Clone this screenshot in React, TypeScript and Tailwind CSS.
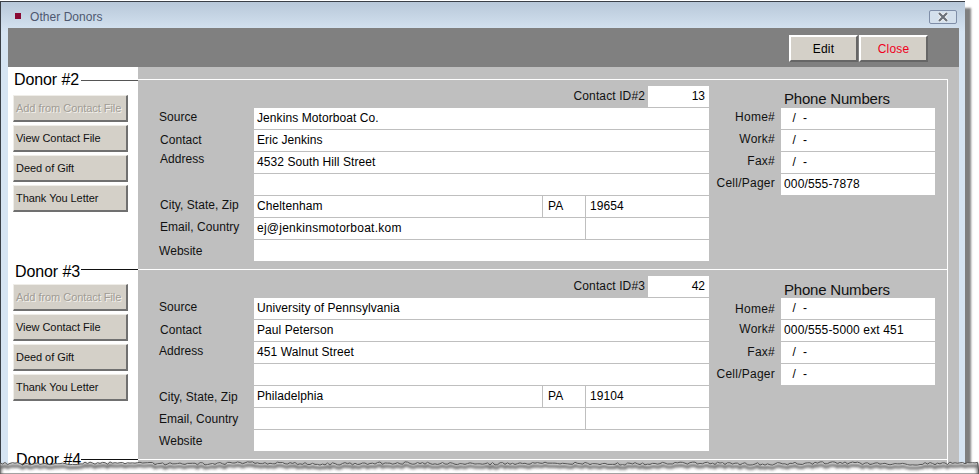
const sans = "font-['Liberation_Sans',Arial,sans-serif]";

function Btn({ label, disabled }: { label: string; disabled?: boolean }) {
  return (
    <div
      className={`h-[27px] w-[115px] bg-[#d4d0c8] border-t border-l border-t-[#efede8] border-l-[#efede8] border-r-2 border-b-2 border-r-[#707070] border-b-[#707070] flex items-center pl-[2px] text-[11px] leading-none tracking-[-0.05px] ${disabled ? "text-[#a09c95] [text-shadow:1px_1px_0_#f4f2ee]" : "text-[#111]"}`}
    >
      {label}
    </div>
  );
}

function TopBtn({ label, red }: { label: string; red?: boolean }) {
  return (
    <div
      className={`h-[27px] w-[69px] bg-[#d4d0c8] border-t-2 border-l-2 border-t-white border-l-white border-r-2 border-b-2 border-r-[#666] border-b-[#666] flex items-center justify-center text-[12px] tracking-[0.2px] ${red ? "text-[#f0001c]" : "text-black"}`}
    >
      {label}
    </div>
  );
}

function Field({ children, className = "" }: { children?: React.ReactNode; className?: string }) {
  return <div className={`bg-white h-[21px] leading-[20px] pl-[3px] text-[12px] tracking-[0.08px] text-black whitespace-nowrap ${className}`}>{children}</div>;
}

function Row({ label, off, x, children }: { label: string; off: string; x?: string; children: React.ReactNode }) {
  return (
    <div className="flex h-[22px]">
      <div className="w-[116px] shrink-0 pt-px">
        <div className={`leading-[16px] text-[12px] text-[#111] whitespace-nowrap tracking-[0.05px] ${x ?? "ml-[22px]"} ${off}`}>{label}</div>
      </div>
      <div className="flex w-[455px] gap-px">{children}</div>
    </div>
  );
}

function PhoneRow({ label, value, off }: { label: string; value: string; off: string }) {
  const isEmpty = value === empty;
  return (
    <div className="flex h-[22px]">
      <div className={`w-[72px] pr-[6px] text-right leading-[19px] text-[12px] tracking-[0.25px] text-[#111] whitespace-nowrap ${off}`}>{label}</div>
      <Field className="w-[154px] pl-[2px] tracking-[0.15px]">
        <span className={`whitespace-pre ${isEmpty ? "-ml-[2px]" : ""}`}>{value}</span>
      </Field>
    </div>
  );
}

const empty = "   /  -";

type D = {
  n: number;
  id: string;
  source: string;
  contact: string;
  address: string;
  city: string;
  st: string;
  zip: string;
  email: string;
  phones: string[];
  rows: { contact: string; address: string; city: string; email: string; web: string };
  xs: { address: string; city: string; email: string };
  ph: string[];
  phoneHead: string;
  labelCls: string;
  btnTop: string;
  lineCls: string;
};

const donors: D[] = [
  {
    n: 2,
    id: "13",
    source: "Jenkins Motorboat Co.",
    contact: "Eric Jenkins",
    address: "4532 South Hill Street",
    city: "Cheltenham",
    st: "PA",
    zip: "19654",
    email: "ej@jenkinsmotorboat.kom",
    phones: [empty, empty, empty, "000/555-7878"],
    rows: { contact: "mt-px", address: "-mt-[2px]", city: "mt-0", email: "mt-0", web: "mt-[2px]" },
    xs: { address: "ml-[22px]", city: "ml-[22px]", email: "ml-[22px]" },
    ph: ["mt-0", "mt-0", "mt-0", "mt-0"],
    phoneHead: "leading-[25px]",
    labelCls: "ml-[6px] -mt-[8px]",
    btnTop: "mt-[6px]",
    lineCls: "top-[1px] bg-[#555]",
  },
  {
    n: 3,
    id: "42",
    source: "University of Pennsylvania",
    contact: "Paul Peterson",
    address: "451 Walnut Street",
    city: "Philadelphia",
    st: "PA",
    zip: "19104",
    email: "",
    phones: [empty, "000/555-5000 ext 451", empty, empty],
    rows: { contact: "mt-px", address: "mt-0", city: "mt-[2px]", email: "mt-[2px]", web: "mt-[2px]" },
    xs: { address: "ml-[21px]", city: "ml-[21px]", email: "ml-[21px]" },
    ph: ["mt-[2px]", "mt-0", "mt-px", "mt-px"],
    phoneHead: "leading-[27px]",
    labelCls: "ml-[7px] -mt-[6px]",
    btnTop: "mt-[3px]",
    lineCls: "top-0 bg-[#111]",
  },
];

function Section({ d }: { d: D }) {
  return (
    <div className="flex h-[190px] shrink-0">
      <div className="w-[130px] shrink-0 bg-white relative">
        <div className={`text-[16px] leading-[18px] tracking-[-0.1px] text-black ${d.labelCls}`}>Donor #{d.n}</div>
        <div className={`flex flex-col gap-[3px] ml-[5px] ${d.btnTop}`}>
          <Btn label="Add from Contact File" disabled />
          <Btn label="View Contact File" />
          <Btn label="Deed of Gift" />
          <Btn label="Thank You Letter" />
        </div>
        <div className={`absolute left-[73px] right-0 h-px ${d.lineCls}`} />
      </div>
      <div className="flex-1 bg-[#bfbfbf] pr-[11px]">
        <div className="h-full border-t border-r border-white flex pt-[6px]">
          <div className="w-[571px] shrink-0">
            <div className="flex justify-end h-[22px]">
              <div className="text-[12px] leading-[20px] mr-[3px] tracking-[0.12px] text-[#111]">Contact ID#{d.n}</div>
              <div className="bg-white w-[61px] h-[21px] text-right pr-[4px] text-[12px] leading-[20px]">{d.id}</div>
            </div>
            <Row label="Source" off="mt-0" x="ml-[21px]">
              <Field className="flex-1">{d.source}</Field>
            </Row>
            <Row label="Contact" off={d.rows.contact}>
              <Field className="flex-1">{d.contact}</Field>
            </Row>
            <Row label="Address" off={d.rows.address} x={d.xs.address}>
              <Field className="flex-1">{d.address}</Field>
            </Row>
            <Row label="" off="mt-0">
              <Field className="flex-1" />
            </Row>
            <Row label="City, State, Zip" off={d.rows.city} x={d.xs.city}>
              <Field className="w-[288px]">{d.city}</Field>
              <Field className="w-[42px] pl-[5px]">{d.st}</Field>
              <Field className="flex-1 pl-[4px]">{d.zip}</Field>
            </Row>
            <Row label="Email, Country" off={d.rows.email} x={d.xs.email}>
              <Field className="w-[331px] tracking-[0.25px]">{d.email}</Field>
              <Field className="flex-1" />
            </Row>
            <Row label="Website" off={d.rows.web} x="ml-[21px]">
              <Field className="flex-1" />
            </Row>
          </div>
          <div>
            <div className={`h-[22px] pl-[75px] text-[15px] tracking-[-0.2px] text-[#111] whitespace-nowrap ${d.phoneHead}`}>Phone Numbers</div>
            <PhoneRow label="Home#" value={d.phones[0]} off={d.ph[0]} />
            <PhoneRow label="Work#" value={d.phones[1]} off={d.ph[1]} />
            <PhoneRow label="Fax#" value={d.phones[2]} off={d.ph[2]} />
            <PhoneRow label="Cell/Pager" value={d.phones[3]} off={d.ph[3]} />
          </div>
        </div>
      </div>
    </div>
  );
}

// jagged torn-paper edge, from a small deterministic sequence
function tornPath() {
  let s = 7;
  let p = "M0 474 L0 464";
  for (let x = 0; x <= 979; x += 2.5) {
    s = (s * 73 + 41) % 1009;
    const y = 462.4 + (s % 10) / 4 + Math.sin(x / 23) * 0.5;
    p += ` L${x} ${y.toFixed(1)}`;
  }
  return p + " L979 474 Z";
}
const torn = tornPath();

export default function App() {
  return (
    <div className={`relative w-[979px] h-[474px] overflow-hidden bg-white ${sans}`}>
      <div className="w-[965px] h-[474px] mt-px border-t border-l border-[#3a3f46] shadow-[6px_7px_2px_rgba(0,0,0,0.5)] bg-gradient-to-b from-[#b8c8d9] to-[#d6e4f2] to-[30px] flex flex-col">
        <div className="h-[26px] flex items-center pl-[14px] shrink-0">
          <div className="w-[6px] h-[6px] mt-[2px] bg-[#8a0a34]" />
          <div className="ml-[9px] mt-[4px] text-[12px] text-[#4e5870] tracking-[0.05px]">Other Donors</div>
          <div className="ml-auto mr-[8px] mt-[4px] w-[28px] h-[14px] border border-[#7f8ea8] rounded-[2px] bg-[#d4e0ec] flex items-center justify-center">
            <svg width="14" height="10" viewBox="0 0 14 10">
              <path d="M3 1 L11 9 M11 1 L3 9" stroke="#fff" strokeWidth="3.8" />
              <path d="M3 1 L11 9 M11 1 L3 9" stroke="#6c727a" strokeWidth="2.4" />
            </svg>
          </div>
        </div>
        <div className="ml-[7px] mr-[6px] flex-1 flex flex-col min-h-0">
          <div className="h-[39px] bg-[#808080] shrink-0 flex justify-end items-start pt-[7px] pr-[31px] gap-px">
            <TopBtn label="Edit" />
            <TopBtn label="Close" red />
          </div>
          <div className="flex h-[12px] shrink-0">
            <div className="w-[130px] bg-white" />
            <div className="flex-1 bg-[#bfbfbf]" />
          </div>
          {donors.map((d) => (
            <Section key={d.n} d={d} />
          ))}
          <div className="flex h-[30px] shrink-0">
            <div className="w-[130px] shrink-0 bg-white relative">
              <div className="-mt-[8px] ml-[8px] text-[16px] leading-[18px] tracking-[-0.1px] text-black">Donor #4</div>
              <div className="absolute left-[73px] right-0 top-0 h-px bg-[#111]" />
            </div>
            <div className="flex-1 bg-[#bfbfbf] pr-[11px]">
              <div className="h-full border-t border-r border-white" />
            </div>
          </div>
        </div>
      </div>
      <svg className="absolute inset-0" width="979" height="474" viewBox="0 0 979 474">
        <defs>
          <filter id="b" x="-5%" y="-200%" width="110%" height="500%">
            <feGaussianBlur stdDeviation="1.8" />
          </filter>
        </defs>
        <path d={torn} fill="#fff" />
        <path d={torn} transform="translate(0,3)" fill="none" stroke="#222" strokeWidth="3" opacity="0.7" filter="url(#b)" />
        <path d={torn} fill="none" stroke="#555" strokeWidth="1" />
      </svg>
    </div>
  );
}
